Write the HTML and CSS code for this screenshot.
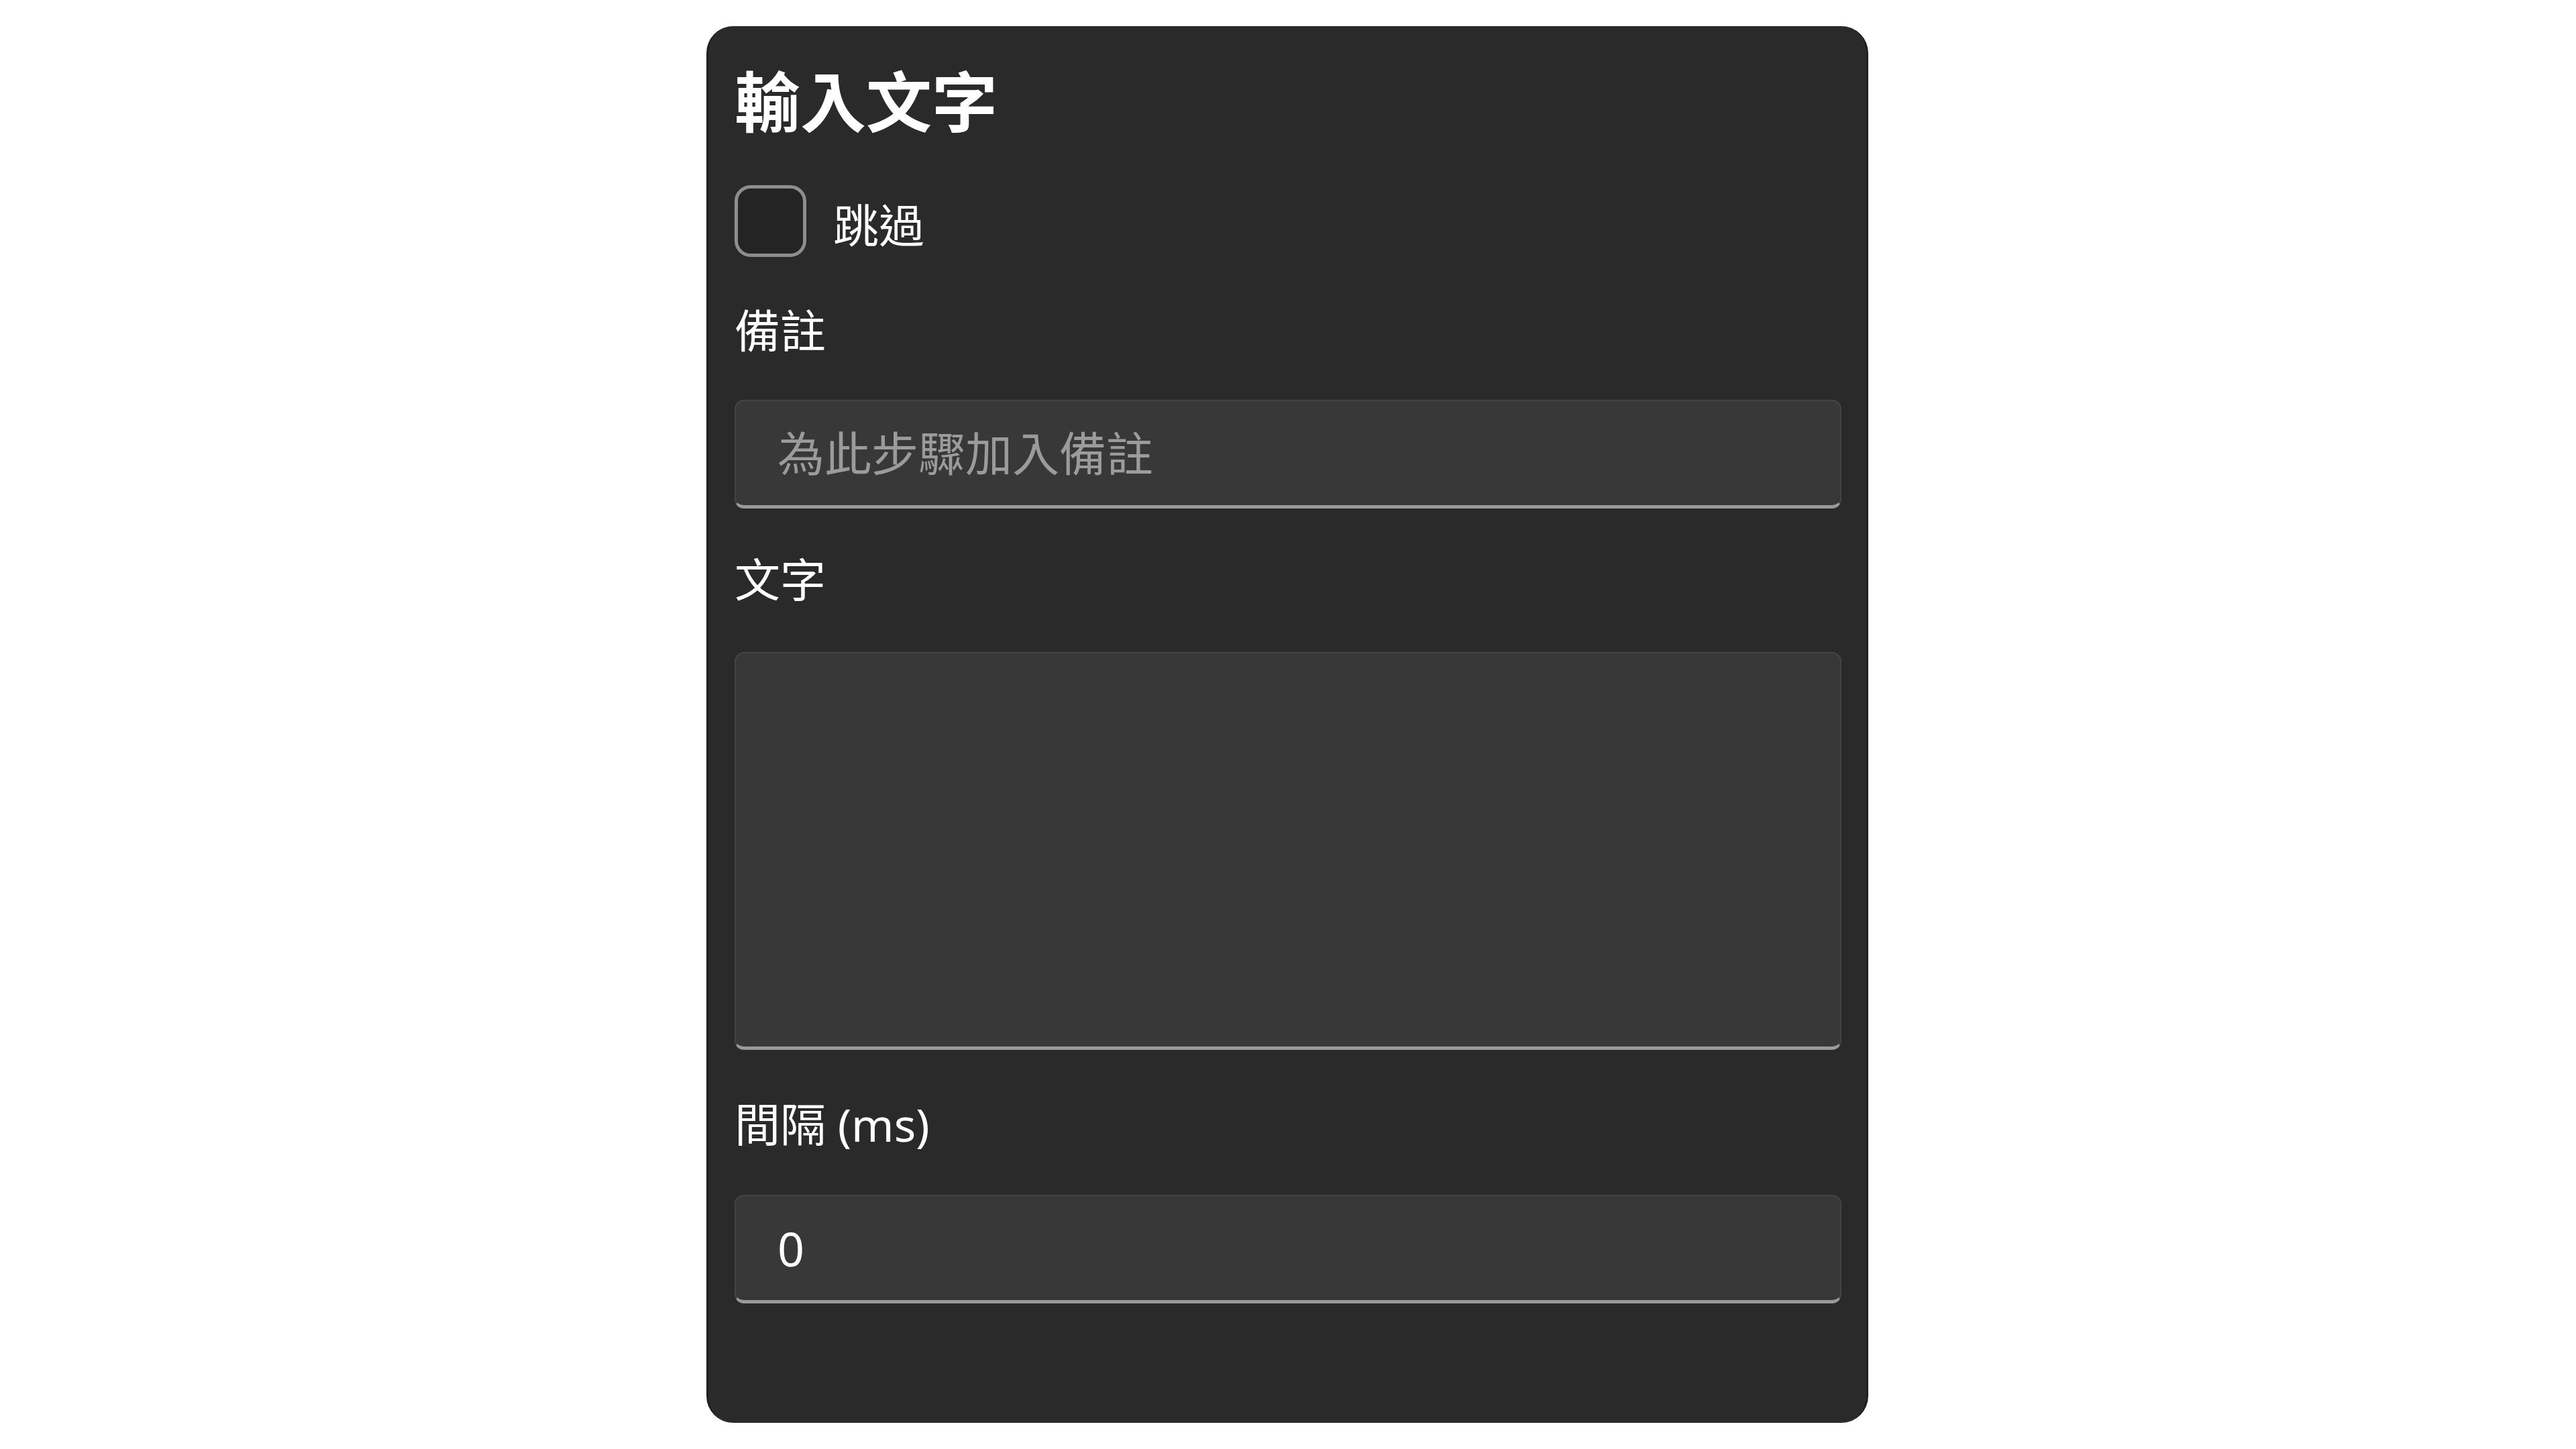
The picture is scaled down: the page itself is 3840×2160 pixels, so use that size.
FILE: index.html
```html
<!DOCTYPE html>
<html lang="zh-Hant">
<head>
<meta charset="utf-8">
<title>輸入文字</title>
<link rel="stylesheet" href="styles.css">
</head>
<body>
<div class="page">
  <section class="panel">
    <h2 class="title">輸入文字</h2>
    <label class="check-row">
      <input type="checkbox" class="cb">
      <span class="check-label">跳過</span>
    </label>
    <div class="field field-note">
      <div class="label">備註</div>
      <input type="text" class="control" placeholder="為此步驟加入備註">
    </div>
    <div class="field field-text">
      <div class="label">文字</div>
      <textarea class="control area"></textarea>
    </div>
    <div class="field field-interval">
      <div class="label">間隔 (ms)</div>
      <input type="text" class="control" value="0">
    </div>
  </section>
</div>
</body>
</html>
```

FILE: styles.css
```css
html, body {
  margin: 0;
  padding: 0;
  background: #ffffff;
}

body {
  font-family: "Segoe UI", "Noto Sans", "Noto Sans CJK TC", sans-serif;
  color: #ffffff;
}

.page {
  display: flex;
  justify-content: flex-start;
  padding: 39px 0 0 1053px;
}

.panel {
  box-sizing: border-box;
  width: 1732px;
  height: 2082px;
  background: #2a2a2a;
  border-radius: 40px;
  border-left: 3px solid #1f1f1f;
  border-right: 3px solid #1f1f1f;
  padding: 45px 37px 0 39px;
  display: flex;
  flex-direction: column;
}

.title {
  margin: 0;
  font-size: 98px;
  font-weight: 700;
  line-height: 125px;
  height: 125px;
  font-family: "Noto Sans CJK TC", sans-serif;
}

.check-row {
  margin-top: 67px;
  display: flex;
  align-items: center;
  gap: 40px;
  height: 107px;
}

.cb {
  appearance: none;
  -webkit-appearance: none;
  box-sizing: border-box;
  margin: 0;
  width: 107px;
  height: 107px;
  border: 5px solid #8e8e8e;
  border-radius: 24px;
  background: #242424;
}

.check-label {
  font-family: "Noto Sans CJK TC", sans-serif;
  font-size: 68px;
  line-height: 95px;
  padding-top: 6px;
}

.field {
  display: flex;
  flex-direction: column;
}

.field-note {
  margin-top: 62px;
}

.field-text {
  margin-top: 58px;
}

.field-interval {
  margin-top: 63px;
}

.label {
  font-size: 68px;
  line-height: 95px;
  height: 95px;
}

.control {
  box-sizing: border-box;
  margin-top: 56px;
  width: 100%;
  height: 162px;
  background: #383838;
  border: 2px solid #444444;
  border-bottom: 5px solid #9a9a9a;
  border-radius: 14px;
  padding: 0 62px;
  font-family: "Segoe UI", "Noto Sans", "Noto Sans CJK TC", sans-serif;
  font-size: 70px;
  color: #ffffff;
  outline: none;
}

.control::placeholder {
  color: #9b9b9b;
  font-family: "Noto Sans CJK TC", sans-serif;
}

.area {
  margin-top: 61px;
  height: 593px;
  resize: none;
  padding: 30px 62px;
}

.field-interval .control {
  margin-top: 58px;
}
```
